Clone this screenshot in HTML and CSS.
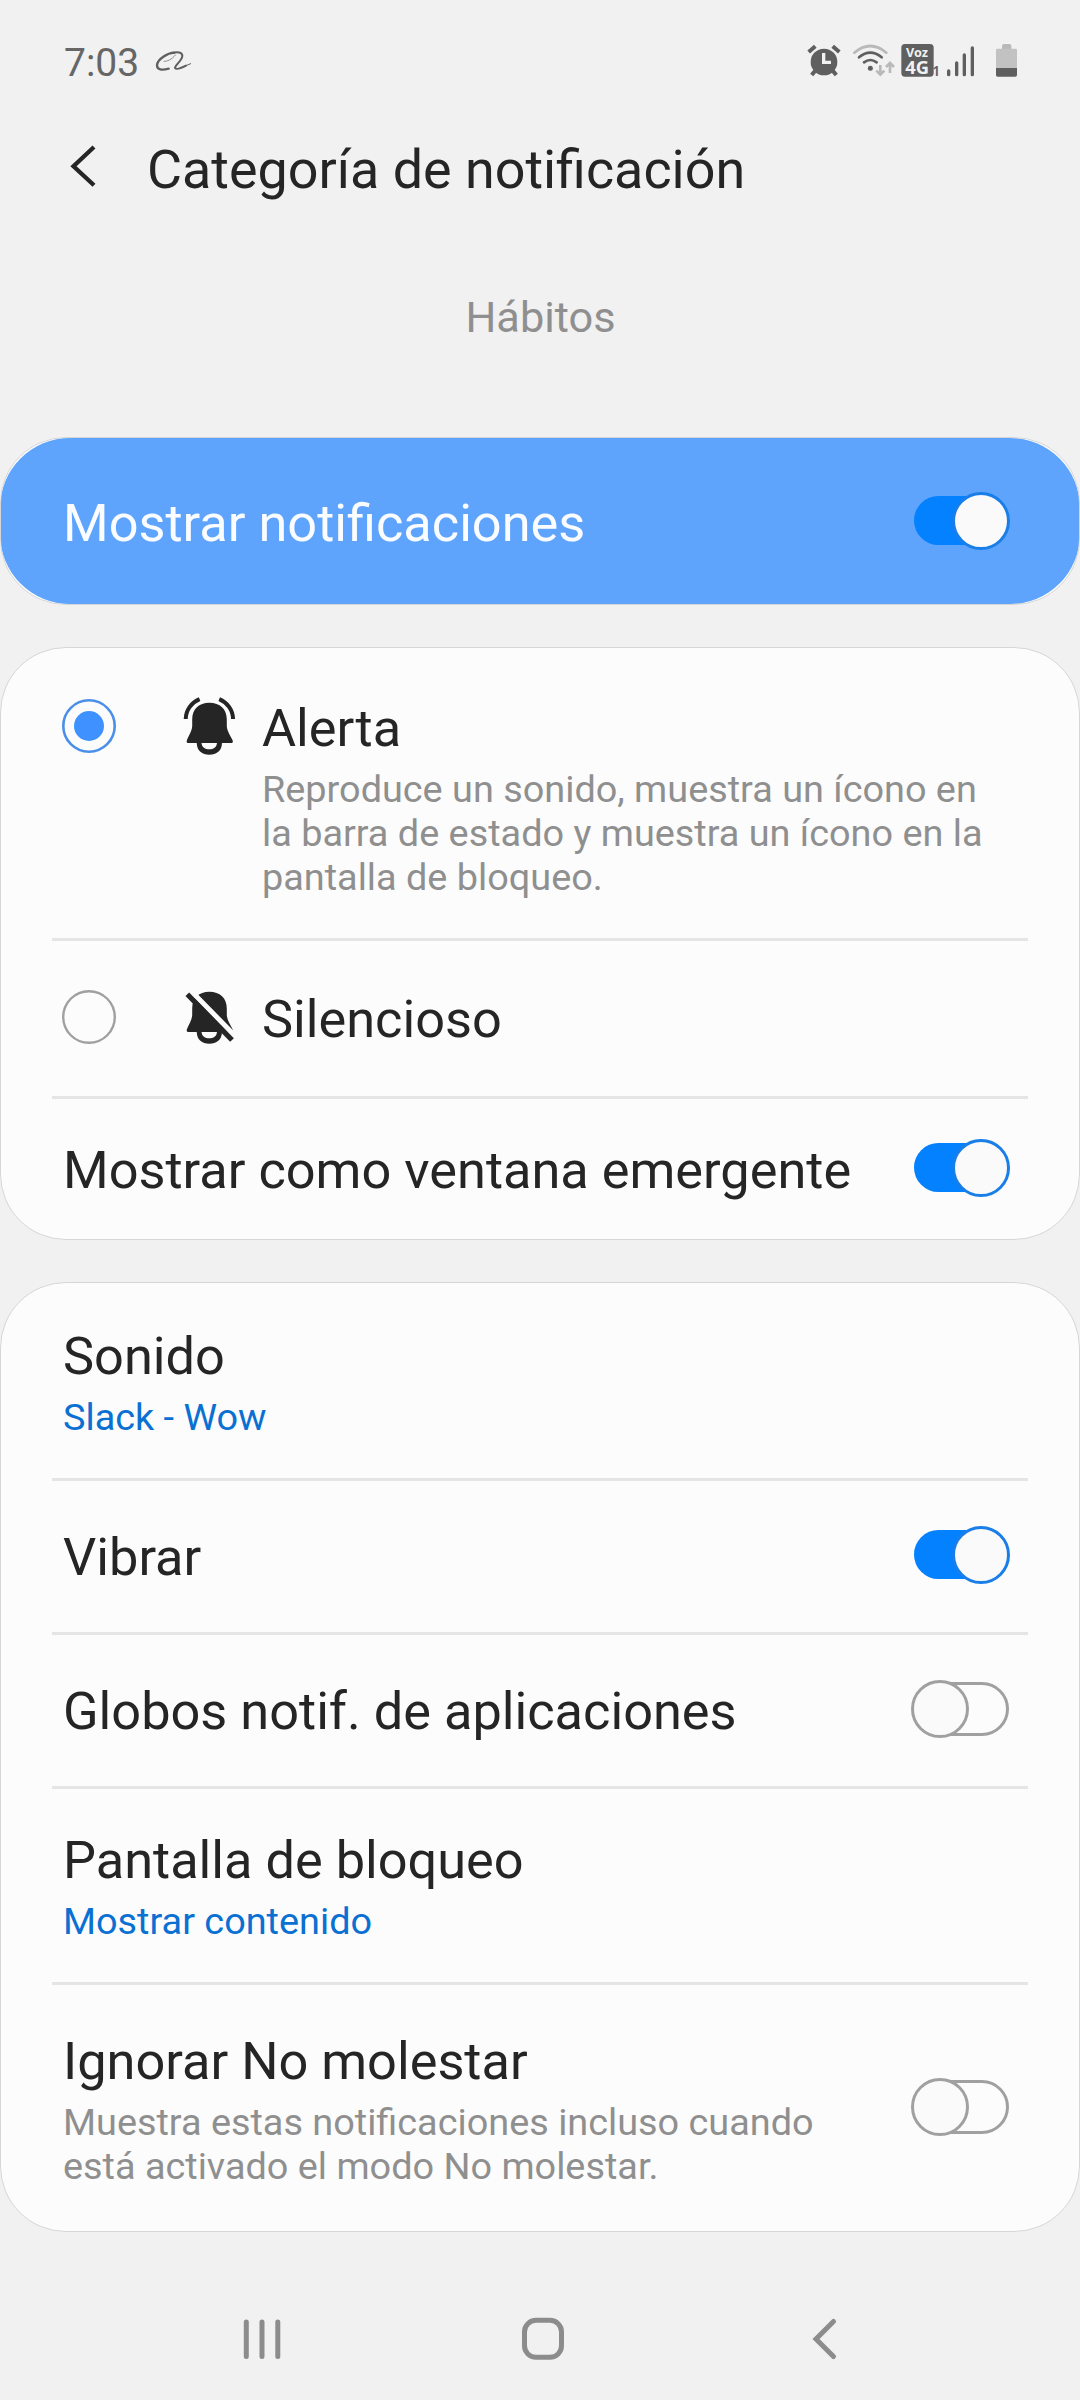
FILE: index.html
```html
<!DOCTYPE html>
<html lang="es">
<head>
<meta charset="utf-8">
<title>Categoría de notificación</title>
<link rel="stylesheet" href="styles.css">
</head>
<body>
<svg class="defs" width="0" height="0" aria-hidden="true">
  <symbol id="switch-on" viewBox="0 0 100 58">
    <rect x="4" y="4" width="90" height="49" rx="24.5" fill="#0381fe"/>
    <circle cx="71" cy="29" r="27.5" fill="#fafafa" stroke="#1a7ee8" stroke-width="3"/>
  </symbol>
  <symbol id="switch-off" viewBox="0 0 100 58">
    <rect x="12" y="3.5" width="85.5" height="51" rx="25.5" fill="#fcfcfc" stroke="#a0a0a0" stroke-width="3"/>
    <circle cx="30" cy="29" r="27.5" fill="#fafafa" stroke="#a0a0a0" stroke-width="3"/>
  </symbol>
  <symbol id="bell" viewBox="0 0 53 59">
    <path fill="#252525" d="M26.3 5.7C16 5.7 9.2 12 9.2 22.500V29C9 34 6 38 3.900 43.200Q3 46 5.500 46H13.700C14 54 19 57.700 26.300 57.700S38.800 54 39 46H48Q50.600 46 49.600 43.200C47 38 44 34 43.800 29V22.500C43.800 12 37 5.700 26.300 5.700ZM18.500 46H34C33.500 50.500 30.500 52.300 26.300 52.300S19 50.500 18.500 46Z"/>
  </symbol>
</svg>

<header class="status">
  <span class="clock">7:03</span>
  <svg class="app" width="38" height="22" viewBox="345 90 114 66" fill="none" stroke="#5f5f5f" stroke-linecap="round">
    <path stroke-width="7" d="M403 98C383 99 352 117 351 136C351 150 366 151 386 146"/>
    <path stroke-width="3" stroke="#8c8c8c" d="M372 124C382 124 394 120 406 105"/>
    <path stroke-width="6" d="M398 99C413 95 426 97 427 107C427 122 405 134 405 144C409 150 428 142 438 137"/>
    <path stroke-width="3" d="M436 138L452 131"/>
  </svg>
  <div class="indicators">
    <svg width="34" height="36" viewBox="51 36 102 108">
      <g stroke="#5f5f5f" stroke-width="12"><path d="M56 66L76 49M148 66L128 49"/><path d="M76 122L65 135M128 122L139 135"/></g>
      <circle cx="102" cy="96" r="40" fill="#5f5f5f"/>
      <path d="M101 69V97H123" fill="none" stroke="#f1f1f1" stroke-width="10"/>
    </svg>
    <svg class="wifi" width="43" height="36" viewBox="186 36 129 108" fill="none" stroke-width="8" stroke-linecap="round">
      <path stroke="#b9b9b9" d="M193 68Q241 28 289 68"/>
      <path stroke="#5f5f5f" d="M207 82Q241 54 275 82M222 97Q241 83 260 97"/>
      <circle cx="241" cy="115" r="7.500" fill="#5f5f5f"/>
      <path stroke="#b9b9b9" stroke-linecap="butt" d="M271 105V133M259 122L271 134L283 122M300 129V100M288 111L300 99L312 111"/>
    </svg>
    <svg class="volte" width="42" height="36" viewBox="333 36 126 108">
      <rect x="334" y="42" width="97" height="98" rx="11" fill="#5f5f5f"/>
      <text fill="#f1f1f1"><tspan x="348" y="81" font-size="38">Voz</tspan><tspan x="346" y="131" font-size="55">4G</tspan></text>
      <text x="427" y="138" font-size="42" fill="#5f5f5f" font-weight="600">1</text>
    </svg>
    <svg class="signal" width="29" height="36" viewBox="468 36 87 108" stroke="#5f5f5f" stroke-width="10" stroke-linecap="round">
      <path d="M476 123V134M500 99V134M523 75V134M547 54V134"/>
    </svg>
    <svg class="battery" width="23" height="36" viewBox="615 36 69 108">
      <path fill="#b9b9b9" d="M636 58V48Q636 42 642 42H658Q664 42 664 48V58Z"/>
      <path fill="#c2c2c2" d="M618 114V60Q618 56 622 56H677Q681 56 681 60V114Z"/>
      <path fill="#5f5f5f" d="M618 114H681V135Q681 140 676 140H623Q618 140 618 135Z"/>
    </svg>
  </div>
</header>

<div class="titlebar">
  <svg width="30" height="44" viewBox="68 144 30 44"><path d="M94 147L73.500 166.200L94 185.300" fill="none" stroke="#252525" stroke-width="4.300"/></svg>
  <h1>Categoría de notificación</h1>
</div>
<p class="category">Hábitos</p>

<main>
  <section class="card master">
    <div class="fill">
      <span class="label">Mostrar notificaciones</span>
      <svg class="switch"><use href="#switch-on"/></svg>
    </div>
  </section>

  <section class="card">
    <div class="option first">
      <svg class="radio" viewBox="0 0 54 54"><circle cx="27" cy="27" r="25.700" fill="none" stroke="#4a90ea" stroke-width="2.600"/><circle cx="27" cy="27" r="15" fill="#3e91ff"/></svg>
      <svg class="bell" viewBox="0 0 53 59"><use href="#bell"/><path d="M2.700 22C3 13 8.500 5.500 16.600 2.200M50.100 22C49.800 13 44.300 5.500 36.200 2.200" fill="none" stroke="#252525" stroke-width="4"/></svg>
      <div class="text">
        <div class="label">Alerta</div>
        <div class="sub">Reproduce un sonido, muestra un ícono en<br>la barra de estado y muestra un ícono en la<br>pantalla de bloqueo.</div>
      </div>
    </div>
    <hr>
    <div class="option silent">
      <svg class="radio" viewBox="0 0 54 54"><circle cx="27" cy="27" r="25.800" fill="none" stroke="#a0a0a0" stroke-width="2.400"/></svg>
      <svg class="bell" viewBox="0 0 53 59"><use href="#bell"/><path d="M4 1L56 54" stroke="#fcfcfc" stroke-width="5.200"/><path d="M4.300 8.300L49 54" stroke="#252525" stroke-width="5.200"/></svg>
      <div class="text"><div class="label">Silencioso</div></div>
    </div>
    <hr>
    <div class="row popup">
      <span class="label">Mostrar como ventana emergente</span>
      <svg class="switch"><use href="#switch-on"/></svg>
    </div>
  </section>

  <section class="card">
    <div class="row detail sound">
      <div><div class="label">Sonido</div><div class="sub link">Slack - Wow</div></div>
    </div>
    <hr>
    <div class="row">
      <span class="label">Vibrar</span>
      <svg class="switch"><use href="#switch-on"/></svg>
    </div>
    <hr>
    <div class="row">
      <span class="label">Globos notif. de aplicaciones</span>
      <svg class="switch"><use href="#switch-off"/></svg>
    </div>
    <hr>
    <div class="row detail">
      <div><div class="label">Pantalla de bloqueo</div><div class="sub link">Mostrar contenido</div></div>
    </div>
    <hr>
    <div class="row dnd">
      <div><div class="label">Ignorar No molestar</div><div class="sub">Muestra estas notificaciones incluso cuando<br>está activado el modo No molestar.</div></div>
      <svg class="switch"><use href="#switch-off"/></svg>
    </div>
  </section>
</main>

<nav class="navbar">
  <svg width="44" height="44" viewBox="240 2317 44 44" stroke="#8c8c8c" stroke-width="5" stroke-linecap="round"><path d="M246.300 2322V2356.500M262 2322V2356.500M277.800 2322V2356.500"/></svg>
  <svg width="44" height="44" viewBox="521 2317 44 44"><rect x="524.500" y="2320.300" width="37" height="37" rx="11.500" fill="none" stroke="#8c8c8c" stroke-width="5"/></svg>
  <svg width="44" height="44" viewBox="802 2317 44 44"><path d="M833.500 2321.500L816 2339L833.500 2356.500" fill="none" stroke="#8c8c8c" stroke-width="5" stroke-linecap="round"/></svg>
</nav>
</body>
</html>
```
FILE: styles.css
```css
* { box-sizing: border-box; }
body {
  margin: 0;
  width: 1080px;
  height: 2400px;
  background: #f1f1f1;
  color: #252525;
  font-family: Roboto, sans-serif;
  overflow: hidden;
}
svg { display: block; flex: none; }
.defs { position: absolute; }

.status {
  display: flex;
  align-items: center;
  height: 120px;
  padding: 0 62px 0 64px;
}
.clock { font-size: 39px; line-height: 46px; width: 91px; margin-top: 5px; color: #666; }
.app { margin-top: 2px; }
.indicators { display: flex; margin-left: auto; }
.wifi { margin-left: 11px; }
.volte { margin-left: 6px; font-family: "Noto Sans", sans-serif; font-weight: 700; }
.signal { margin-left: 3px; }
.battery { margin-left: 20px; }

.titlebar { display: flex; align-items: flex-start; padding: 18px 68px 0; gap: 49px; }
.titlebar svg { margin-top: 6px; }
h1 { margin: 0; font-size: 53.85px; font-weight: 400; line-height: 63px; }
.category {
  margin: 91px 0 93px;
  padding-left: 1px;
  text-align: center;
  font-size: 43.3px;
  line-height: 52px;
  color: #8f8f8f;
}

main { display: flex; flex-direction: column; gap: 42px; }
.card {
  border: 1px solid #d6d6d6;
  border-radius: 66px;
  background: #fcfcfc;
  overflow: hidden;
}
.master { height: 168px; }
.fill {
  display: flex;
  align-items: flex-start;
  justify-content: space-between;
  height: 166px;
  margin: 0 -1px;
  padding: 54px 70px 50px 63px;
  border-radius: 70px;
  background: #5ea4fd;
  color: #fafcff;
}
.label { font-size: 52.3px; line-height: 62px; white-space: nowrap; }
.sub { margin-top: 8px; font-size: 37.85px; line-height: 44px; color: #8f8f8f; white-space: nowrap; }
.link { color: #0a70d2; }
hr { margin: 0 51px; height: 3px; border: 0; background: #e5e5e5; }

.row {
  display: flex;
  align-items: center;
  justify-content: space-between;
  padding: 45px 69px 44px 62px;
}
.switch { width: 100px; height: 58px; margin-bottom: 4px; }
.popup { padding-top: 40px; padding-bottom: 38px; }
.detail { padding-top: 40px; padding-bottom: 39px; }
.sound { padding-top: 42px; }
.dnd { padding-bottom: 43px; }

.option { display: flex; align-items: flex-start; padding: 0 61px; }
.first { padding-top: 49px; padding-bottom: 39px; }
.silent { padding-top: 47px; padding-bottom: 46px; }
.radio { width: 54px; height: 54px; margin-top: 2px; }
.bell { width: 53px; height: 59px; margin: 0 26px 0 67px; }
.silent .bell { margin-top: -2px; }

.navbar { display: flex; justify-content: space-between; padding: 85px 234px 0 240px; }
```
